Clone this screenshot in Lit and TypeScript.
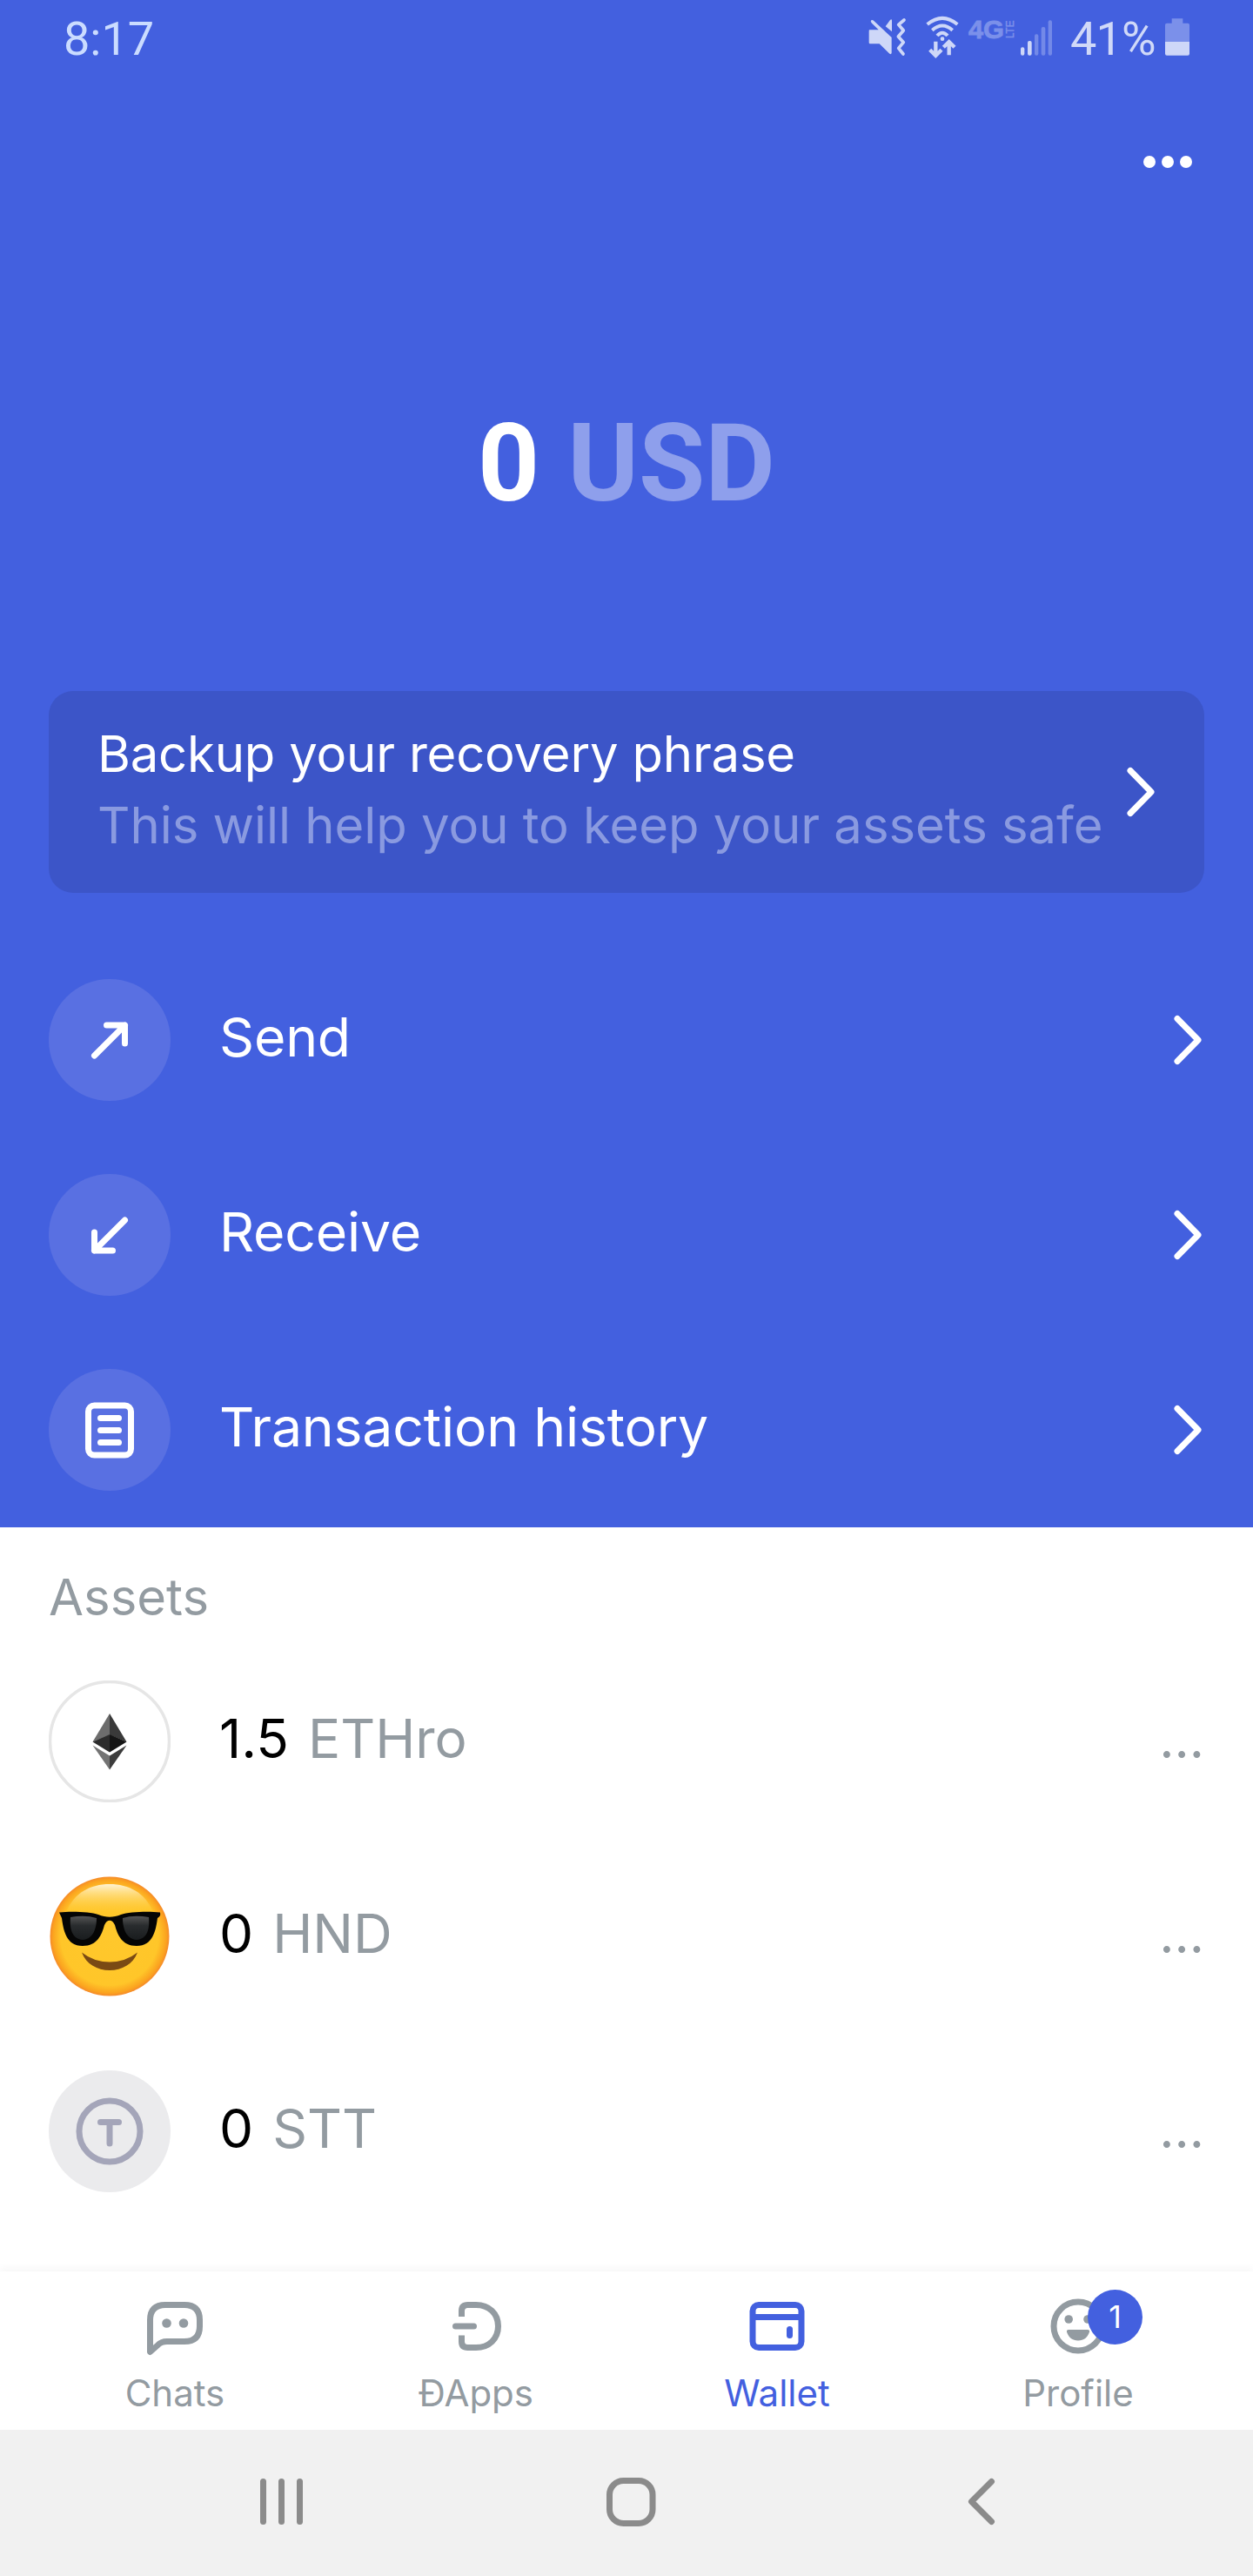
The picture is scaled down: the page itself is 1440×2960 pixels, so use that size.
import { LitElement, html, css, svg } from "lit";
import { customElement, property } from "lit/decorators.js";

const chevron = html`<svg width="32" height="58" viewBox="0 0 32 58" fill="none" stroke="#fff" stroke-width="7" stroke-linecap="round" stroke-linejoin="round"><path d="M4 4.5 28 29 4 53.5" /></svg>`;

const sendIcon = svg`<g stroke="#fff" stroke-width="7" stroke-linecap="round" stroke-linejoin="round" fill="none"><path d="M52.500 88 87.500 53M66.500 53H87.500V74" /></g>`;
const receiveIcon = svg`<g stroke="#fff" stroke-width="7" stroke-linecap="round" stroke-linejoin="round" fill="none"><path d="M87.500 53 52.500 88M52.500 67V88H73.500" /></g>`;
const historyIcon = svg`<g stroke="#fff" stroke-width="7" stroke-linecap="round" fill="none"><rect x="45.500" y="42" width="49" height="57" rx="7" /><path d="M59.500 56.500h21M59.500 70.500h21M59.500 84.500h21" /></g>`;

const ethIcon = svg`
  <circle cx="70" cy="70" r="68.500" fill="#fff" stroke="#e6e6e6" stroke-width="3.500" />
  <path d="M70 38 50.500 70.500 70 62.500Z" fill="#6d6d6d" /><path d="M70 38 89.500 70.500 70 62.500Z" fill="#3a3a3a" />
  <path d="M70 62 50.500 70.500 70 82.500Z" fill="#2c2c2c" /><path d="M70 62 89.500 70.500 70 82.500Z" fill="#151515" />
  <path d="M50.500 74.500 70 86.500V102.500Z" fill="#747474" /><path d="M89.500 74.500 70 86.500V102.500Z" fill="#3c3c3c" />`;

const coolIcon = svg`
  <defs>
    <radialGradient id="face"><stop offset="0" stop-color="#ffc82c" /><stop offset=".82" stop-color="#ffc629" /><stop offset=".95" stop-color="#fba31f" /><stop offset="1" stop-color="#f58a2a" /></radialGradient>
    <linearGradient id="shine" x1="0" y1="0" x2="0" y2="1"><stop offset="0" stop-color="#fff3d2" /><stop offset="1" stop-color="#ffc832" stop-opacity=".2" /></linearGradient>
    <linearGradient id="lens" x1="0" y1="0" x2="0" y2="1"><stop offset="0" stop-color="#555" /><stop offset=".4" stop-color="#292c2e" /><stop offset="1" stop-color="#191c1e" /></linearGradient>
  </defs>
  <circle cx="70" cy="70" r="68.500" fill="url(#face)" />
  <path d="M20 42C29 20 48 10 70 10S111 20 120 42Z" fill="url(#shine)" />
  <path d="M12 42.500C27 41 48 42 57 45 66 48.500 74 48.500 83 45 92 42 113 41 128 42.500Q129 47 125 49C123 63 120 81 101 81 84 81 79 68 76 57 73 50 67 50 64 57 61 68 56 81 39 81 20 81 17 63 15 49 11 47 12 42.500Z" fill="#050505" />
  <path d="M25 48Q42 45 55 49C55 59 52 73 39 74 26 73 24 60 25 48Z" fill="url(#lens)" />
  <path d="M115 48Q98 45 85 49C85 59 88 73 101 74 114 73 116 60 115 48Z" fill="url(#lens)" />
  <path d="M38 88.500Q52 99.500 70 99.500T102 88.500C97 102 84 109 70 109S43 102 38 88.500Z" fill="#7a4a14" />`;

const tokenIcon = svg`
  <circle cx="70" cy="70" r="70" fill="#ebebed" />
  <g fill="none" stroke="#a4a5b9" stroke-width="7" stroke-linecap="round"><circle cx="70" cy="70" r="35" /><path d="M59.500 59.500h21M70 59.500V84" /></g>`;

const chatsIcon = svg`<path d="M13.500 71.500V35Q13.500 17.500 31 17.500H53Q70.500 17.500 70.500 35V42Q70.500 59.500 53 59.500H33Q26 59.500 22 64Z" fill="none" stroke="currentColor" stroke-width="7" stroke-linejoin="round" /><circle cx="32.500" cy="38.500" r="5.300" fill="currentColor" /><circle cx="52" cy="38.500" r="5.300" fill="currentColor" />`;
const dappsIcon = svg`<g fill="none" stroke="currentColor" stroke-width="7"><path d="M25.500 31V24.500Q25.500 17.500 32.500 17.500H42C57 17.500 67.500 27.500 67.500 42S57 66.500 42 66.500H32.500Q25.500 66.500 25.500 59.500V52.500" /><path d="M18.500 42H39.500" stroke-linecap="round" /></g>`;
const walletIcon = svg`<g fill="none" stroke="currentColor" stroke-width="7"><rect x="14" y="17.500" width="56" height="49" rx="7" /><path d="M14 31.500H70" /><path d="M56.500 45.500V52.500" stroke-linecap="round" /></g>`;
const profileIcon = svg`<circle cx="42" cy="42" r="28" fill="none" stroke="currentColor" stroke-width="7" /><g fill="currentColor"><circle cx="31.200" cy="34" r="4.800" /><circle cx="53" cy="34" r="4.800" /><path d="M31 46H53Q55.500 46 55 48.500C53 55 48.500 58.500 42 58.500S31 55 29 48.500Q28.500 46 31 46Z" /></g>`;

@customElement("status-bar")
class StatusBar extends LitElement {
  static styles = css`
    :host { display: flex; height: 84px; padding: 0 73px 0 73px; font: 400 54px/78px Roboto, sans-serif; color: #d0d9f8; }
    .time { flex: 1; padding-top: 6px; color: #cbdcff; }
    svg { display: block; flex: none; }
    .wifi { margin-left: 20px; }
    .network { margin-left: 8px; }
    .signal { margin-left: 5px; }
    .percent { width: 110px; padding: 6px 0 0 18px; box-sizing: border-box; white-space: nowrap; letter-spacing: -0.8px; margin-right: 17px; }
  `;
  render() {
    return html`
      <div class="time">8:17</div>
      <svg width="45" height="84" viewBox="105 0 135 252">
        <g fill="#ced7f8"><path d="M112 103H143L120 80Q114 74 118 70 122 67 127 72L188 129V182Q187 189 181 185L146 151H114Q110 151 110 147V107Q110 103 112 103Z" /><path d="M167 91 183 69Q188 64 189 70V109Z" /></g>
        <path d="M231 69 212 85 229 105 211 126 229 146 212 166 228 186" fill="none" stroke="#ced7f8" stroke-width="11" stroke-linejoin="round" stroke-linecap="round" />
      </svg>
      <svg class="wifi" width="42" height="84" viewBox="300 0 126 252" fill="none" stroke="#ced7f8" stroke-width="12">
        <path d="M311 84Q363 41 415 84M328 104Q363 73 398 104M345 123Q363 103 381 123" />
        <circle cx="363" cy="134" r="7" fill="#ced7f8" stroke="none" />
        <path d="M340 143V190M320 172 340 192 360 172M386 190V147M367 163 386 144 405 163" stroke-width="13" />
      </svg>
      <svg class="network" width="55" height="84" viewBox="0 0 55 84" fill="#7b90ea" stroke="#7b90ea" font-family="Liberation Sans, sans-serif" font-weight="700">
        <text x="1" y="44" font-size="29" stroke-width="0.800" textLength="41" lengthAdjust="spacingAndGlyphs">4G</text>
        <text transform="translate(53 44) rotate(-90)" font-weight="400" font-size="13.500" stroke-width="0.500" textLength="20.500" lengthAdjust="spacingAndGlyphs">LTE</text>
      </svg>
      <svg class="signal" width="40" height="84" viewBox="636 0 120 252">
        <g fill="#ced7f8"><rect x="639" y="163" width="13" height="28" rx="6" /><rect x="663" y="141" width="14" height="50" rx="6" /></g>
        <g fill="#7389e8"><rect x="687" y="118" width="13" height="73" rx="6" /><rect x="710" y="93" width="14" height="98" rx="6" /><rect x="734" y="70" width="13" height="121" rx="6" /></g>
      </svg>
      <div class="percent">41%</div>
      <svg width="28" height="84" viewBox="1134 0 84 252"><path d="M1157 64H1195V80H1212Q1218 80 1218 86V144H1134V86Q1134 80 1140 80H1157Z" fill="#7b90ea" /><path d="M1134 144H1218V185Q1218 191 1212 191H1140Q1134 191 1134 185Z" fill="#ced7f8" /></svg>
    `;
  }
}

@customElement("action-row")
class ActionRow extends LitElement {
  @property() label = "";
  @property({ attribute: false }) icon: unknown;
  static styles = css`
    :host { display: flex; align-items: center; height: 224px; padding: 0 59px 0 56px; }
    .icon { width: 140px; height: 140px; border-radius: 50%; background: #5970e2; }
    .label { flex: 1; padding: 0 0 8px 56px; font-size: 62.5px; line-height: 80px; color: #fff; letter-spacing: -0.2px; }
    svg { display: block; flex: none; }
  `;
  render() {
    return html`<svg class="icon" viewBox="0 0 140 140">${this.icon}</svg><div class="label">${this.label}</div>${chevron}`;
  }
}

@customElement("asset-row")
class AssetRow extends LitElement {
  @property() amount = "";
  @property() symbol = "";
  @property({ attribute: false }) icon: unknown;
  static styles = css`
    :host { display: flex; align-items: center; height: 224px; padding: 0 56px; color: #939ba1; font-size: 62px; line-height: 80px; }
    svg { display: block; flex: none; }
    .text { flex: 1; display: flex; padding: 0 0 7px 56px; }
    .amount { color: #000; margin-right: 22px; }
    .value { padding-bottom: 6px; font-size: 60px; }
  `;
  render() {
    return html`<svg width="140" height="140" viewBox="0 0 140 140">${this.icon}</svg>
      <div class="text"><span class="amount">${this.amount}</span><span>${this.symbol}</span></div>
      <div class="value">...</div>`;
  }
}

@customElement("tab-item")
class TabItem extends LitElement {
  @property() label = "";
  @property() badge = "";
  @property({ attribute: false }) icon: unknown;
  static styles = css`
    :host { flex: 1; display: flex; flex-direction: column; align-items: center; }
    .icon { position: relative; width: 84px; height: 84px; }
    svg { display: block; }
    .badge { position: absolute; left: 53px; top: 0; width: 63px; height: 63px; border-radius: 50%; background: #4360df; color: #fff; font-size: 36px; line-height: 63px; text-align: center; }
    .label { margin-top: 10px; font-size: 42px; line-height: 50px; }
  `;
  render() {
    return html`<div class="icon"><svg width="84" height="84" viewBox="0 0 84 84">${this.icon}</svg>${this.badge ? html`<span class="badge">${this.badge}</span>` : ""}</div>
      <div class="label">${this.label}</div>`;
  }
}

@customElement("app-root")
class AppRoot extends LitElement {
  static styles = css`
    :host { display: flex; flex-direction: column; width: 1440px; height: 2960px; overflow: hidden; background: #fff; font-family: Inter, sans-serif; }
    .hero { height: 1755px; background: #4360df; color: #fff; }
    .toolbar { display: flex; justify-content: flex-end; gap: 7px; padding: 95px 70px 0 0; }
    .dot { width: 14px; height: 14px; border-radius: 50%; background: #fff; }
    .balance { display: flex; justify-content: center; gap: 32px; margin-top: 260px; font: 700 124px/160px Roboto, sans-serif; }
    .currency { color: #8e9fec; }
    .backup { display: flex; align-items: center; box-sizing: border-box; height: 232px; margin: 181px 56px 57px; padding: 0 57px 0 56px; border-radius: 28px; background: #3c55c8; font-size: 58px; line-height: 81.5px; }
    .copy { flex: 1; white-space: nowrap; padding-bottom: 5px; }
    .title { letter-spacing: -0.2px; }
    .hint { color: #8a9ae0; letter-spacing: -0.04px; }
    .backup svg { display: block; }
    .heading { box-sizing: border-box; height: 134px; padding: 28px 56px 0; color: #939ba1; font-size: 58px; line-height: 104px; }
    .assets { flex: 1; }
    .tabs { display: flex; box-sizing: border-box; height: 182px; padding: 21px 28px 0; color: #939ba1; background: #fff; box-shadow: 0 -4px 8px rgba(0, 0, 0, 0.035); }
    .active { color: #4360df; }
    .system { display: flex; height: 168px; background: #f1f1f1; }
    .system svg { display: block; }
  `;
  render() {
    return html`
      <div class="hero">
        <status-bar></status-bar>
        <div class="toolbar"><i class="dot"></i><i class="dot"></i><i class="dot"></i></div>
        <div class="balance"><span>0</span><span class="currency">USD</span></div>
        <div class="backup">
          <div class="copy"><div class="title">Backup your recovery phrase</div><div class="hint">This will help you to keep your assets safe</div></div>
          ${chevron}
        </div>
        <action-row label="Send" .icon=${sendIcon}></action-row>
        <action-row label="Receive" .icon=${receiveIcon}></action-row>
        <action-row label="Transaction history" .icon=${historyIcon}></action-row>
      </div>
      <div class="assets">
        <div class="heading">Assets</div>
        <asset-row amount="1.5" symbol="ETHro" .icon=${ethIcon}></asset-row>
        <asset-row amount="0" symbol="HND" .icon=${coolIcon}></asset-row>
        <asset-row amount="0" symbol="STT" .icon=${tokenIcon}></asset-row>
      </div>
      <div class="tabs">
        <tab-item label="Chats" .icon=${chatsIcon}></tab-item>
        <tab-item label="ÐApps" .icon=${dappsIcon}></tab-item>
        <tab-item class="active" label="Wallet" .icon=${walletIcon}></tab-item>
        <tab-item label="Profile" badge="1" .icon=${profileIcon}></tab-item>
      </div>
      <div class="system">
        <svg width="1440" height="168" viewBox="0 0 1440 168" fill="none" stroke="#8b8b8b" stroke-width="7" stroke-linecap="round" stroke-linejoin="round">
          <path d="M302.500 59.500V105.500M323.500 59.500V105.500M344.500 59.500V105.500" />
          <rect x="700.500" y="58.500" width="49.500" height="49" rx="16" />
          <path d="M1139.500 59.500 1116.500 82.500 1139.500 105.500" />
        </svg>
      </div>
    `;
  }
}
